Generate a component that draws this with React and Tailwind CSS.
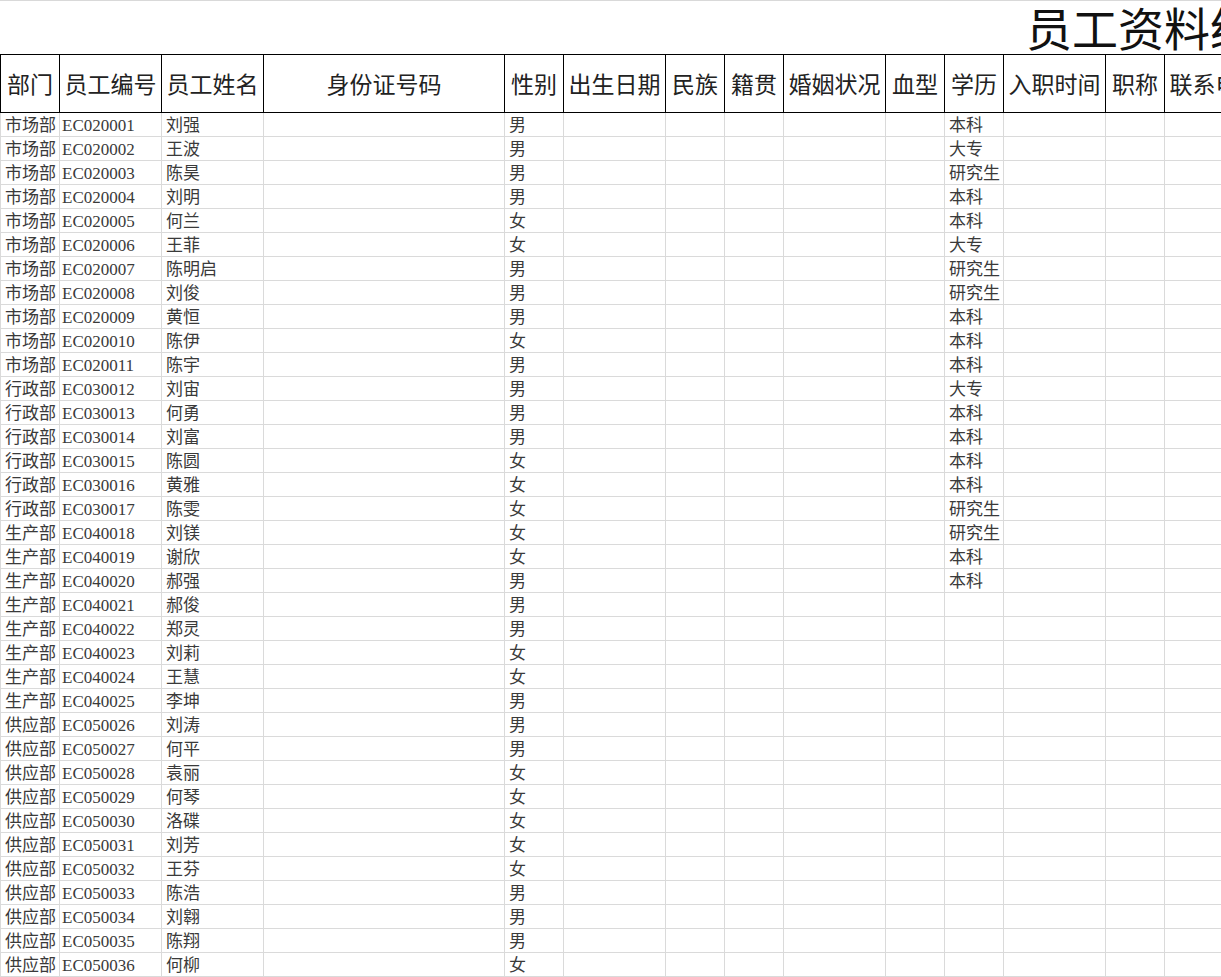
import React from 'react';

const columns = [
  { title: '部门', w: 'w-[60px]' },
  { title: '员工编号', w: 'w-[102px]' },
  { title: '员工姓名', w: 'w-[102px]' },
  { title: '身份证号码', w: 'w-[241px]' },
  { title: '性别', w: 'w-[59px]' },
  { title: '出生日期', w: 'w-[102px]' },
  { title: '民族', w: 'w-[59px]' },
  { title: '籍贯', w: 'w-[59px]' },
  { title: '婚姻状况', w: 'w-[102px]' },
  { title: '血型', w: 'w-[59px]' },
  { title: '学历', w: 'w-[59px]' },
  { title: '入职时间', w: 'w-[102px]' },
  { title: '职称', w: 'w-[59px]' },
  { title: '联系电话', w: 'w-[102px]' },
];

const rows = [
  ['市场部', 'EC020001', '刘强', '男', '本科'],
  ['市场部', 'EC020002', '王波', '男', '大专'],
  ['市场部', 'EC020003', '陈昊', '男', '研究生'],
  ['市场部', 'EC020004', '刘明', '男', '本科'],
  ['市场部', 'EC020005', '何兰', '女', '本科'],
  ['市场部', 'EC020006', '王菲', '女', '大专'],
  ['市场部', 'EC020007', '陈明启', '男', '研究生'],
  ['市场部', 'EC020008', '刘俊', '男', '研究生'],
  ['市场部', 'EC020009', '黄恒', '男', '本科'],
  ['市场部', 'EC020010', '陈伊', '女', '本科'],
  ['市场部', 'EC020011', '陈宇', '男', '本科'],
  ['行政部', 'EC030012', '刘宙', '男', '大专'],
  ['行政部', 'EC030013', '何勇', '男', '本科'],
  ['行政部', 'EC030014', '刘富', '男', '本科'],
  ['行政部', 'EC030015', '陈圆', '女', '本科'],
  ['行政部', 'EC030016', '黄雅', '女', '本科'],
  ['行政部', 'EC030017', '陈雯', '女', '研究生'],
  ['生产部', 'EC040018', '刘镁', '女', '研究生'],
  ['生产部', 'EC040019', '谢欣', '女', '本科'],
  ['生产部', 'EC040020', '郝强', '男', '本科'],
  ['生产部', 'EC040021', '郝俊', '男', ''],
  ['生产部', 'EC040022', '郑灵', '男', ''],
  ['生产部', 'EC040023', '刘莉', '女', ''],
  ['生产部', 'EC040024', '王慧', '女', ''],
  ['生产部', 'EC040025', '李坤', '男', ''],
  ['供应部', 'EC050026', '刘涛', '男', ''],
  ['供应部', 'EC050027', '何平', '男', ''],
  ['供应部', 'EC050028', '袁丽', '女', ''],
  ['供应部', 'EC050029', '何琴', '女', ''],
  ['供应部', 'EC050030', '洛碟', '女', ''],
  ['供应部', 'EC050031', '刘芳', '女', ''],
  ['供应部', 'EC050032', '王芬', '女', ''],
  ['供应部', 'EC050033', '陈浩', '男', ''],
  ['供应部', 'EC050034', '刘翱', '男', ''],
  ['供应部', 'EC050035', '陈翔', '男', ''],
  ['供应部', 'EC050036', '何柳', '女', ''],
];

const font = "font-['Liberation_Serif','Noto_Sans_CJK_SC',serif]";

export default function App() {
  return (
    <div className={`w-[1221px] h-[977px] overflow-hidden bg-white text-black ${font}`}>
      {/* title row */}
      <div className="h-[55px] w-[1300px] border-t border-b border-t-[#d9d9d9] border-b-black flex items-center pt-[6px]">
        <div className="pl-[1026px] whitespace-nowrap text-[46px] leading-none text-[#111]">
          员工资料统计表
        </div>
      </div>

      {/* header row */}
      <div className="flex w-[1300px] h-[58px] border-b border-black">
        {columns.map((c, i) => (
          <div
            key={c.title}
            className={`${c.w} shrink-0 h-full border-r border-black ${i === 0 ? 'border-l' : ''} flex items-center justify-center pt-[5px] whitespace-nowrap text-[23px] text-[#222] overflow-hidden`}
          >
            {c.title}
          </div>
        ))}
      </div>

      {/* data rows */}
      {rows.map((r) => (
        <div key={r[1]} className="flex w-[1300px] h-[24px] border-b border-[#dadada]">
          {columns.map((c, i) => {
            let text = '';
            if (i === 0) text = r[0];
            if (i === 1) text = r[1];
            if (i === 2) text = r[2];
            if (i === 4) text = r[3];
            if (i === 10) text = r[4];
            return (
              <div
                key={c.title}
                className={`${c.w} shrink-0 h-full border-r border-[#dadada] ${i === 0 ? 'border-l' : ''} flex items-end whitespace-nowrap overflow-hidden text-[17px] leading-[21px] text-[#3a3a3a] ${i === 1 ? 'pl-[2px]' : 'pl-[4px]'}`}
              >
                {text}
              </div>
            );
          })}
        </div>
      ))}
    </div>
  );
}
